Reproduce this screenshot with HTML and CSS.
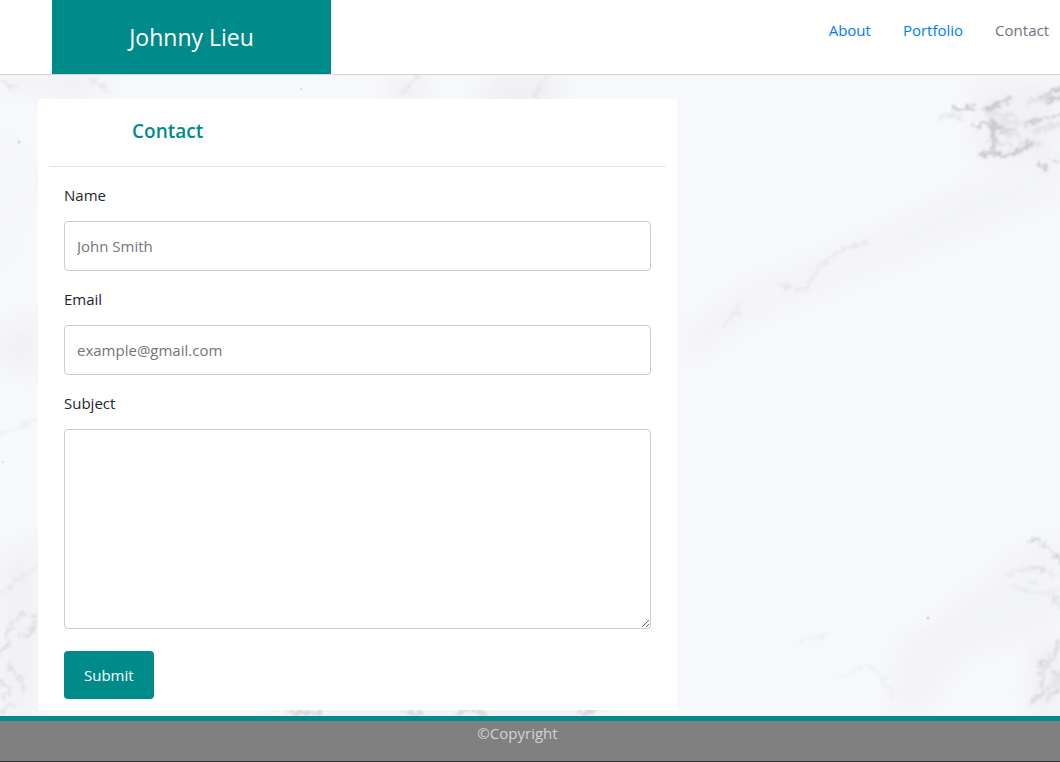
FILE: index.html
```html
<!DOCTYPE html>
<html lang="en">
<head>
<meta charset="utf-8">
<meta name="viewport" content="width=device-width, initial-scale=1">
<title>Johnny Lieu - Contact</title>
<link rel="stylesheet" href="styles.css">
</head>
<body>
<header class="site-header">
  <a class="brand" href="#">Johnny Lieu</a>
  <nav class="site-nav">
    <a class="nav-link" href="#">About</a>
    <a class="nav-link" href="#">Portfolio</a>
    <a class="nav-link nav-link-current" href="#">Contact</a>
  </nav>
</header>
<main class="page">
  <svg class="marble" viewBox="0 0 1060 641" preserveAspectRatio="xMidYMid slice" aria-hidden="true">
    <defs>
      <filter id="rough" x="-10%" y="-10%" width="120%" height="120%">
        <feTurbulence type="fractalNoise" baseFrequency="0.16" numOctaves="3" seed="4" result="n"/>
        <feDisplacementMap in="SourceGraphic" in2="n" scale="13" xChannelSelector="R" yChannelSelector="G"/>
        <feGaussianBlur stdDeviation="1"/>
      </filter>
      <filter id="soft" x="-30%" y="-30%" width="160%" height="160%">
        <feGaussianBlur stdDeviation="11"/>
      </filter>
    </defs>
    <rect width="1060" height="641" fill="#f7f8fc"/>
    <g filter="url(#soft)" fill="#ececf0">
      <path d="M0 0H110L90 20 0 10Z" opacity=".8"/>
      <path d="M0 55L25 100 0 200Z" fill="#f3f5f6"/>
      <path d="M0 255L38 240V300L0 290Z" opacity=".6"/>
      <path d="M395 0H430L410 30H390ZM490 0H560L550 35H480Z" opacity=".8"/>
      <path d="M680 260L740 215 860 165 980 105 1060 90V120L900 185 760 240 680 290Z" opacity=".3"/>
      <path d="M975 10L1060 0V90L980 85Z" opacity=".6"/>
      <path d="M1060 460L1010 485 960 530 900 570 890 641H920L960 580 1060 550Z" opacity=".4"/>
      <path d="M0 490L38 460V641H0Z" opacity=".6"/>
      <path d="M1035 570H1060V641H1030Z" opacity=".8"/>
      <path d="M270 632H610V641H270Z"/>
    </g>
    <g filter="url(#rough)" fill="none" stroke="#b2b2b8" stroke-linecap="round" stroke-width="2">
      <g opacity=".6">
        <path d="M955 34L974 32M985 34L1000 29 1010 24M973 53L985 48 1002 53M982 80L995 79 1006 81 1020 75 1030 67M991 46L994 62 993 73M1040 22L1050 18 1060 14" stroke-width="4"/>
        <path d="M1026 49L1044 42 1060 40M1040 87L1044 94M1052 86L1060 84M1048 27L1060 22M1000 60L1016 52" stroke-width="3"/>
        <path d="M987 38L1014 40M998 46L1020 47M1003 57L1018 61M990 66L1008 69M1028 26L1048 25M1020 70L1040 70M1035 57L1058 49M942 41H960" stroke-width="5" opacity=".35"/>
      </g>
      <g opacity=".2" stroke-width="3">
        <path d="M780 210L807 216 814 198 838 177 870 165M724 252L740 230" opacity=".8"/>
        <path d="M800 566L828 559M840 604L856 594 870 590 881 602 892 620" opacity=".5"/>
        <path d="M90 5L107 14M0 5L15 12M418 0L402 20M548 0L534 22"/>
        <path d="M1005 500L1035 492 1060 502M1012 512L1045 518 1060 514" opacity=".7"/>
        <path d="M0 360L20 352 38 342M0 520L38 490" opacity=".6"/>
      </g>
      <path d="M1028 466L1036 464 1050 475 1060 487" opacity=".6"/>
      <path d="M1031 490L1046 494M1032 507L1034 509M1052 520L1060 532" opacity=".35"/>
      <g opacity=".42" stroke-width="3">
        <path d="M1060 562L1054 580M1038 590L1052 586M1052 600L1060 596M1040 610L1044 618 1030 627M1046 624L1060 614M1038 600L1044 606"/>
        <path d="M1044 595L1060 570M1050 612L1060 603" stroke-width="8" opacity=".4"/>
        <path d="M8 570L6 560 13 547 22 540M36 540L32 556 20 563M0 578L7 570M0 605L10 613 4 622M0 636L12 630M10 590L26 615" opacity=".7"/>
        <path d="M288 638L300 637 320 638M404 638L420 637M458 639L470 634 484 638M580 638L598 635" stroke-width="4"/>
      </g>
    </g>
    <g fill="#d8d8dc"><circle cx="19" cy="67" r="1.5"/><circle cx="928" cy="543" r="1.5"/><circle cx="3" cy="387" r="1"/><circle cx="301" cy="14" r="1"/></g>
  </svg>
  <section class="card">
    <h1 class="card-title">Contact</h1>
    <hr class="rule">
    <form class="form">
      <label class="label" for="name">Name</label>
      <input class="field" id="name" type="text" placeholder="John Smith">
      <label class="label" for="email">Email</label>
      <input class="field" id="email" type="email" placeholder="example@gmail.com">
      <label class="label" for="subject">Subject</label>
      <textarea class="field field-tall" id="subject"></textarea>
      <button class="submit" type="submit">Submit</button>
    </form>
  </section>
</main>
<footer class="site-footer">©Copyright</footer>
</body>
</html>
```
FILE: styles.css
```css
* { box-sizing: border-box; }

body {
  margin: 0;
  background: #2d2f40;
  color: #212529;
  font-family: "Segoe UI", "Open Sans", "Noto Sans", sans-serif;
  font-size: 15px;
  line-height: 24px;
}

.site-header {
  display: flex;
  justify-content: space-between;
  align-items: stretch;
  padding: 0 11px 0 52px;
  background: #fff;
  border-bottom: 1px solid #d3d3d3;
}

.brand {
  flex: 0 1 279px;
  padding: 19px 0;
  background: #008b8b;
  color: #fff;
  font-size: 23px;
  line-height: 36px;
  text-align: center;
  text-decoration: none;
}

.site-nav {
  display: flex;
  gap: 32px;
  padding-top: 18px;
}

.nav-link {
  color: #007bff;
  text-decoration: none;
}

.nav-link-current { color: #6c757d; }

.page {
  position: relative;
  display: grid;
  grid-template-columns: 5fr 3fr;
  padding: 24px 0 6px 38px;
}

.marble {
  position: absolute;
  inset: 0;
  width: 100%;
  height: 100%;
}

.card {
  position: relative;
  padding: 20px 11px 11px;
  background: #fff;
}

.card-title {
  margin: 0 0 23px 83px;
  color: #008b8b;
  font-size: 19px;
  font-weight: 600;
  line-height: 24px;
}

.rule {
  height: 1px;
  margin: 0 0 16px;
  border: 0;
  background: #e5e5e5;
}

.form {
  display: flex;
  flex-direction: column;
  padding: 0 15px;
}

.label { margin-bottom: 14px; }

.field {
  width: 100%;
  height: 50px;
  margin: 0 0 16px;
  padding: 12px;
  border: 1px solid #ccc;
  border-radius: 4px;
  background: #fff;
  color: #212529;
  font: inherit;
}

.field::placeholder { color: #757575; }

.field-tall {
  height: 200px;
  margin-bottom: 22px;
  resize: vertical;
}

.submit {
  align-self: flex-start;
  padding: 12px 20px;
  border: 0;
  border-radius: 4px;
  background: #008b8b;
  color: #fff;
  font: inherit;
}

.site-footer {
  padding: 0 25px 16px 0;
  border-top: 5px solid #008b8b;
  background: #808080;
  color: #d3d3d3;
  text-align: center;
}
```
